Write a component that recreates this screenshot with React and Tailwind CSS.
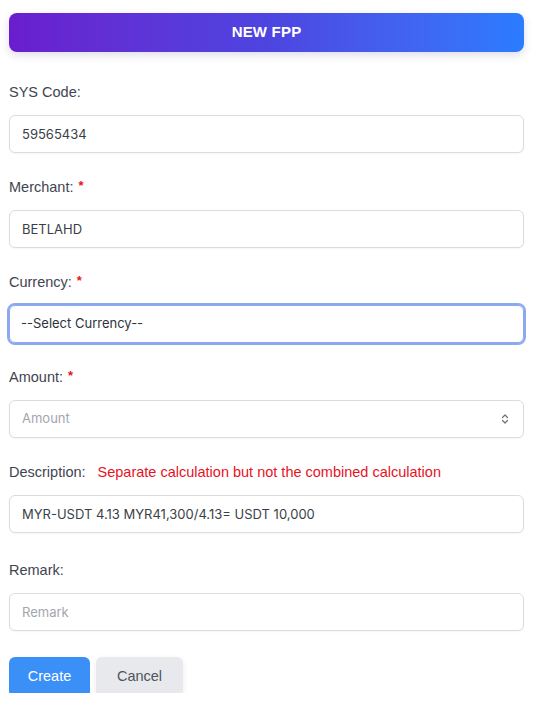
import { useState } from 'react'

const labelFont = { fontFamily: '"Liberation Sans", Arial, sans-serif' }
const inputFont = { fontFamily: 'Inter, "Liberation Sans", sans-serif' }

function Label({ children, required, extra }) {
  return (
    <div className="flex items-center h-5 mb-3 text-[14.5px] text-[#3f4550]">
      <span>{children}</span>
      {required && <span className="ml-[5px] text-[#e8121f] font-bold text-[13px] -mt-[4px]">*</span>}
      {extra && <span className="ml-3 text-[#e8121f]">{extra}</span>}
    </div>
  )
}

const inputBase =
  'w-full h-[38px] rounded-md border border-[#dcdcdf] bg-white px-3 text-[13px] text-[#3a3f47] placeholder:text-[#a3a6ad] shadow-[0_1px_2px_rgba(0,0,0,0.04)] outline-none'

export default function App() {
  const [sysCode, setSysCode] = useState('59565434')
  const [merchant, setMerchant] = useState('BETLAHD')
  const [currency, setCurrency] = useState('')
  const [amount, setAmount] = useState('')
  const [description, setDescription] = useState('MYR-USDT 4.13 MYR41,300/4.13= USDT 10,000')
  const [remark, setRemark] = useState('')

  return (
    <div className="h-[693px] overflow-hidden bg-white" style={labelFont}>
      <div className="pl-[9px] pr-[16px] pt-[13px]">
        {/* Header */}
        <div className="h-[39px] rounded-lg bg-gradient-to-r from-[#6a1dce] via-[#4d44e0] to-[#2a7cff] shadow-[0_3px_8px_rgba(60,60,120,0.18)] flex items-center justify-center">
          <span className="text-white font-bold text-[15px] tracking-[0.2px]">NEW FPP</span>
        </div>

        <div className="mt-[31px]">
          {/* SYS Code */}
          <div className="mb-[25px]">
            <Label>SYS Code:</Label>
            <input className={inputBase} value={sysCode} onChange={(e) => setSysCode(e.target.value)} style={inputFont} />
          </div>

          {/* Merchant */}
          <div className="mb-[25px]">
            <Label required>Merchant:</Label>
            <input className={inputBase} value={merchant} onChange={(e) => setMerchant(e.target.value)} style={inputFont} />
          </div>

          {/* Currency */}
          <div className="mb-[25px]">
            <Label required>Currency:</Label>
            <select
              className="w-full h-[38px] rounded-md border border-[#8aa9ef] bg-white px-[11px] text-[13px] text-[#2f333a] outline-2 outline-[#8aa9ef] appearance-none"
              value={currency}
              onChange={(e) => setCurrency(e.target.value)}
              style={inputFont}
            >
              <option value="">--Select Currency--</option>
              <option value="MYR">MYR</option>
              <option value="USDT">USDT</option>
            </select>
          </div>

          {/* Amount */}
          <div className="mb-[25px]">
            <Label required>Amount:</Label>
            <div className={`${inputBase} flex items-center pr-[14px]`}>
              <input
                className="flex-1 min-w-0 bg-transparent outline-none placeholder:text-[#a3a6ad]"
                placeholder="Amount"
                value={amount}
                onChange={(e) => setAmount(e.target.value)}
                style={inputFont}
              />
              <svg width="8" height="12" viewBox="0 0 8 12" fill="none" stroke="#6b6f76" strokeWidth="1.2" strokeLinecap="round" strokeLinejoin="round">
                <path d="M1.5 4.5 L4 2 L6.5 4.5" />
                <path d="M1.5 7.5 L4 10 L6.5 7.5" />
              </svg>
            </div>
          </div>

          {/* Description */}
          <div className="mb-[28px]">
            <Label extra="Separate calculation but not the combined calculation">Description:</Label>
            <input className={inputBase} value={description} onChange={(e) => setDescription(e.target.value)} style={inputFont} />
          </div>

          {/* Remark */}
          <div className="mb-[26px]">
            <Label>Remark:</Label>
            <input className={inputBase} placeholder="Remark" value={remark} onChange={(e) => setRemark(e.target.value)} style={inputFont} />
          </div>

          {/* Actions */}
          <div className="flex gap-[6px]">
            <button className="w-[81px] h-[40px] rounded-md bg-[#3a90f7] text-white text-[14.5px]">Create</button>
            <button className="w-[87px] h-[40px] rounded-md bg-[#e7e9ed] text-[#50545c] text-[14.5px] shadow-[0_2px_6px_rgba(0,0,0,0.08)]">Cancel</button>
          </div>
        </div>
      </div>
    </div>
  )
}
